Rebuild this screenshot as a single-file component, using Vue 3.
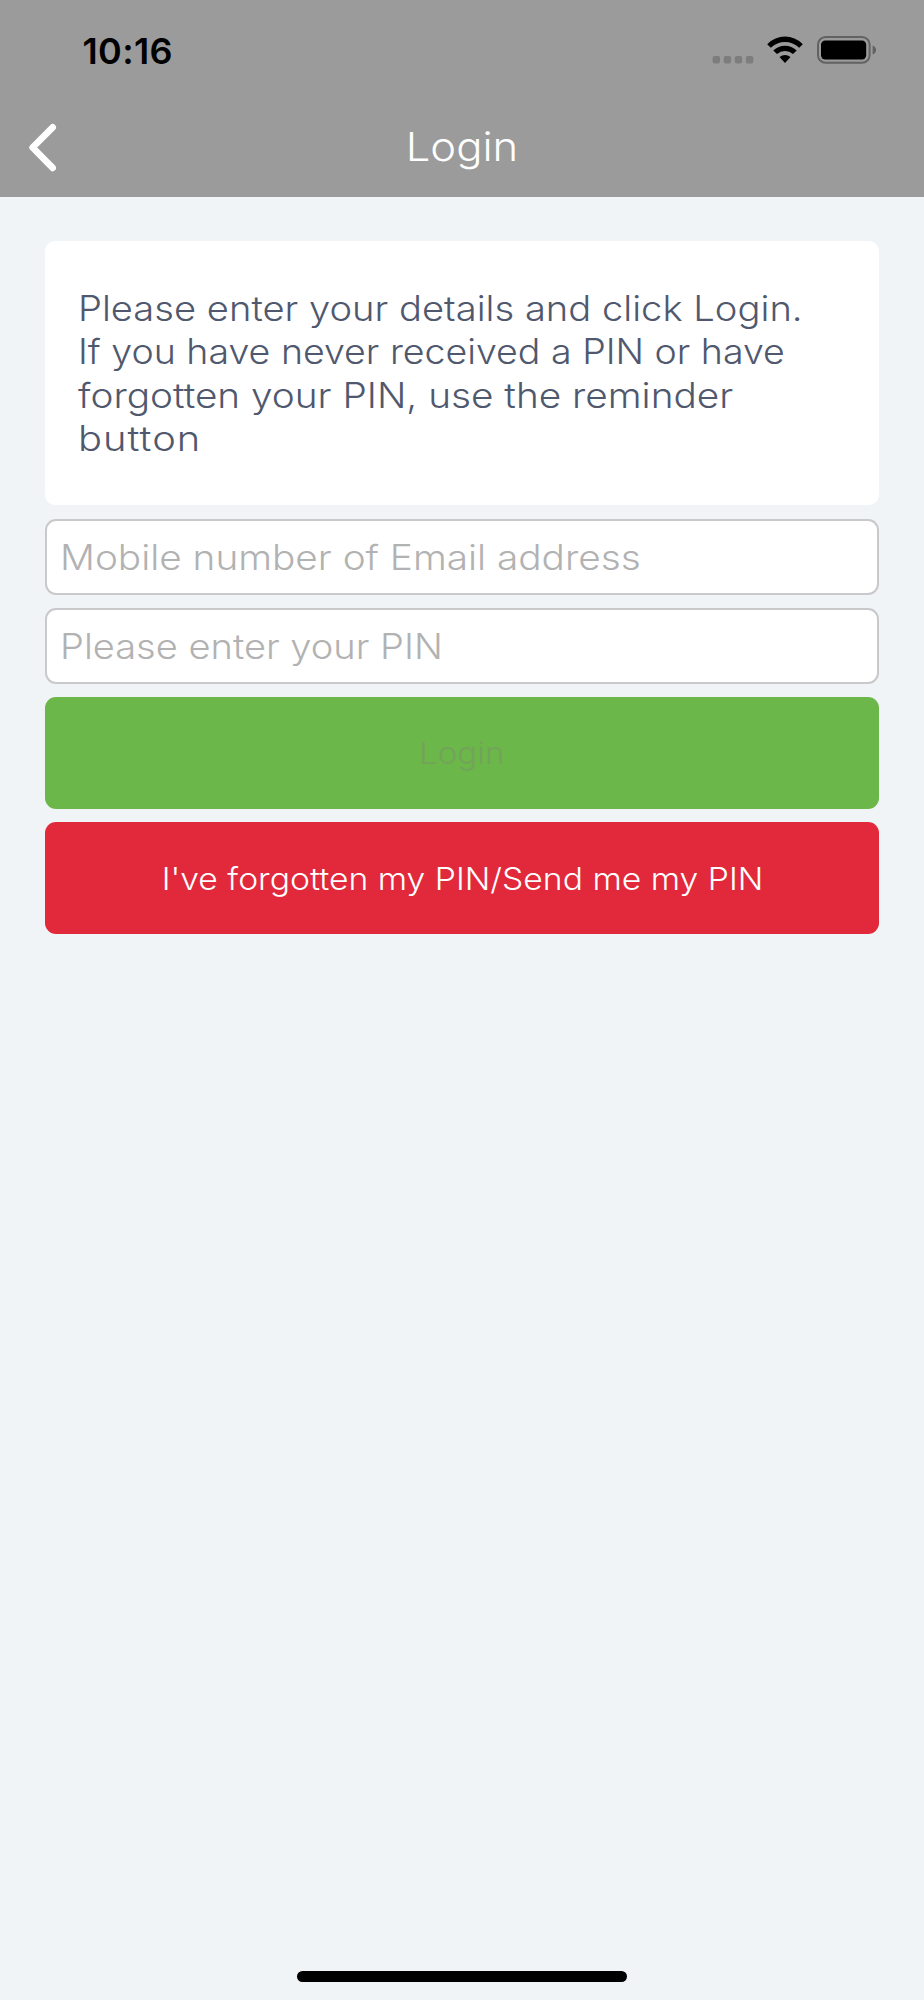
<script setup>
const instructions = [
  { text: 'Please enter your details and click Login.', fit: 'l1' },
  { text: 'If you have never received a PIN or have', fit: 'l2' },
  { text: 'forgotten your PIN, use the reminder', fit: 'l3' },
  { text: 'button', fit: 'l4' },
]
</script>

<template>
  <div class="screen">
    <header class="header">
      <div class="status">
        <span class="time">10:16</span>
        <div class="indicators">
          <svg class="cell" width="42" height="8" viewBox="0 0 42 8">
            <rect v-for="i in 4" :key="i" :x="(i - 1) * 11.1 + 0.6" y="0" width="7.4" height="7.4" rx="2" />
          </svg>
          <svg class="wifi" width="36" height="28" viewBox="0 0 36 28">
            <path d="M0.2 8.2 Q8 0.6 18 0.6 Q28 0.6 35.8 8.2 L32.2 11.8 Q26 5.9 18 5.9 Q10 5.9 3.8 11.8 Z" />
            <path d="M6.3 14.5 Q11.3 9.8 18 9.8 Q24.7 9.8 29.7 14.5 L26 18.1 Q22.5 15 18 15 Q13.5 15 10 18.1 Z" />
            <path d="M12.5 21 Q15 18.9 18 18.9 Q21 18.9 23.5 21 L18 27 Z" />
          </svg>
          <svg class="battery" width="60" height="28" viewBox="0 0 60 28">
            <rect class="shell" x="1" y="1" width="51.6" height="25.8" rx="7.6" />
            <rect x="4" y="4.4" width="45.2" height="19" rx="4.2" />
            <path class="nub" d="M55.6 9.6 Q59 11 59 14 Q59 17 55.6 18.6 Z" />
          </svg>
        </div>
      </div>
      <nav class="nav">
        <button class="back" aria-label="Back">
          <svg width="30" height="50" viewBox="0 0 30 50">
            <path d="M24.7 4.3 L4.6 24.5 L24.7 44.9" />
          </svg>
        </button>
        <h1 class="title"><span class="wide">Login</span></h1>
        <span></span>
      </nav>
    </header>

    <main class="content">
      <section class="card">
        <span v-for="line in instructions" :key="line.text" class="line" :class="line.fit">{{ line.text }}</span>
      </section>
      <div class="field" role="textbox"><span class="hint contact">Mobile number of Email address</span></div>
      <div class="field" role="textbox"><span class="hint pin">Please enter your PIN</span></div>
      <button class="btn login" disabled><span class="wide">Login</span></button>
      <button class="btn reminder"><span class="wide">I've forgotten my PIN/Send me my PIN</span></button>
    </main>

    <div class="home"></div>
  </div>
</template>

<style>
body {
  background: #f0f4f7;
}
</style>

<style scoped>
.screen {
  box-sizing: border-box;
  height: 2000px;
  display: flex;
  flex-direction: column;
  background: #f0f4f7;
  font-family: Inter, "Liberation Sans", sans-serif;
  font-weight: 330;
}
.header {
  box-sizing: border-box;
  height: 197px;
  background: #9b9b9b;
}
.status {
  box-sizing: border-box;
  height: 100px;
  padding: 0 47px 0 82.5px;
  display: flex;
  align-items: center;
  justify-content: space-between;
}
.time {
  padding-top: 1px;
  font-size: 36px;
  font-weight: 600;
  line-height: 44px;
  letter-spacing: 0.33px;
  color: #000;
}
.indicators {
  display: flex;
  align-items: center;
}
.cell {
  margin: 19px 13px 0 0;
  fill: #7d7d7d;
}
.wifi {
  margin-right: 14px;
}
.shell {
  fill: none;
  stroke: #626262;
  stroke-width: 2;
}
.nub {
  fill: #626262;
}
.nav {
  height: 94px;
  display: grid;
  grid-template-columns: 100px 1fr 100px;
  align-items: center;
}
.back {
  height: 50px;
  margin: 1px 0 0 28px;
  padding: 0;
  border: 0;
  background: none;
  text-align: left;
}
.back svg {
  display: block;
  fill: none;
  stroke: #fff;
  stroke-width: 6.6;
  stroke-linecap: round;
  stroke-linejoin: round;
}
.wide {
  display: inline-block;
  white-space: nowrap;
  transform: scaleX(1.104);
}
.title {
  margin: 0;
  font-size: 39.5px;
  font-weight: inherit;
  line-height: 50px;
  text-align: center;
  color: #fff;
}
.content {
  flex: 1;
  padding: 44px 45px 0;
  display: flex;
  flex-direction: column;
}
.card {
  box-sizing: border-box;
  height: 264px;
  margin-bottom: 14px;
  padding: 45.5px 33px 0;
  border-radius: 10px;
  background: #fff;
  color: #50586e;
}
.line {
  display: block;
  font-size: 35px;
  line-height: 43.5px;
  white-space: nowrap;
  transform-origin: left center;
}
.l1 {
  transform: scaleX(1.09);
}
.l2 {
  transform: scaleX(1.072);
}
.l3 {
  transform: scaleX(1.107);
}
.l4 {
  letter-spacing: 0.9px;
  transform: scaleX(1.14);
}
.field {
  box-sizing: border-box;
  height: 76px;
  margin-bottom: 13px;
  padding: 0 13px;
  display: flex;
  align-items: center;
  border: 2px solid #c9c9cb;
  border-radius: 11px;
  background: #fff;
  color: #b2b2b2;
}
.hint {
  font-size: 35px;
  line-height: 44px;
  white-space: nowrap;
  transform-origin: left center;
}
.contact {
  transform: scaleX(1.107);
}
.pin {
  transform: scaleX(1.087);
}
.btn {
  height: 112px;
  padding: 0;
  border: 0;
  border-radius: 11px;
  font-family: inherit;
  font-weight: inherit;
}
.login {
  margin-bottom: 13px;
  background: #6bb74a;
  color: #73a35b;
  font-size: 30px;
}
.reminder {
  background: #e2283b;
  color: #fff;
  font-size: 30.5px;
}
.home {
  width: 330px;
  height: 11px;
  margin: 0 auto 18px;
  border-radius: 6px;
  background: #000;
}
</style>
